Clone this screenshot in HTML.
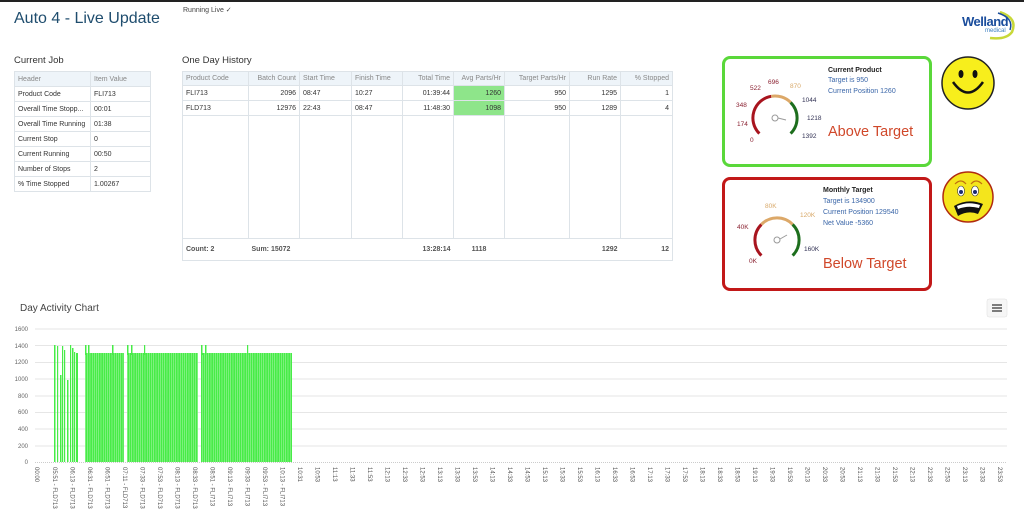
<!DOCTYPE html>
<html><head><meta charset="utf-8"><style>
*{margin:0;padding:0;box-sizing:border-box}
body{width:1024px;height:524px;background:#fff;position:relative;overflow:hidden;font-family:"Liberation Sans",sans-serif;color:#333}
.abs{position:absolute}
table{border-collapse:collapse;font-size:7px;table-layout:fixed}
td{border:1px solid #dde3e8;padding:0 3px;white-space:nowrap;overflow:hidden;color:#333}
.hd td{background:#eef4f9;color:#888}
</style></head><body>
<div class="abs" style="left:0;top:0;width:1024px;height:2px;background:#222"></div>
<div class="abs" style="left:14px;top:10px;font-size:16px;color:#1f4d6e">Auto 4 - Live Update</div>
<div class="abs" style="left:183px;top:6px;font-size:7px;color:#444">Running Live ✓</div>
<div class="abs" style="left:962px;top:14px;font-size:13px;font-weight:bold;color:#1a4d9c;letter-spacing:-0.5px">Welland</div>
<div class="abs" style="left:985px;top:28px;font-size:6px;color:#3a7fc0">medical</div>
<svg class="abs" style="left:960px;top:8px" width="60" height="32"><path d="M40 4 Q58 10 52 24 Q46 32 30 30" fill="none" stroke="#c8d838" stroke-width="2.5"/><path d="M38 5 Q54 10 50 22" fill="none" stroke="#1a4d9c" stroke-width="1.5"/></svg>

<div class="abs" style="left:14px;top:55px;font-size:9.5px;color:#333">Current Job</div>
<table class="abs" style="left:14px;top:71px;width:136px">
<colgroup><col style="width:76px"><col style="width:60px"></colgroup>
<tr class="hd" style="height:15px"><td>Header</td><td>Item Value</td></tr>
<tr style="height:15px"><td>Product Code</td><td>FLI713</td></tr>
<tr style="height:15px"><td>Overall Time Stopp...</td><td>00:01</td></tr>
<tr style="height:15px"><td>Overall Time Running</td><td>01:38</td></tr>
<tr style="height:15px"><td>Current Stop</td><td>0</td></tr>
<tr style="height:15px"><td>Current Running</td><td>00:50</td></tr>
<tr style="height:15px"><td>Number of Stops</td><td>2</td></tr>
<tr style="height:15px"><td>% Time Stopped</td><td>1.00267</td></tr>
</table>

<div class="abs" style="left:182px;top:55px;font-size:9.5px;color:#333">One Day History</div>
<table class="abs" style="left:182px;top:71px;width:490px">
<colgroup><col style="width:66px"><col style="width:51px"><col style="width:52px"><col style="width:51px"><col style="width:51px"><col style="width:51px"><col style="width:65px"><col style="width:51px"><col style="width:52px"></colgroup>
<tr class="hd" style="height:14px"><td>Product Code</td><td style="text-align:right">Batch Count</td><td>Start Time</td><td>Finish Time</td><td style="text-align:right">Total Time</td><td style="text-align:right">Avg Parts/Hr</td><td style="text-align:right">Target Parts/Hr</td><td style="text-align:right">Run Rate</td><td style="text-align:right">% Stopped</td></tr>
<tr style="height:15px"><td>FLI713</td><td style="text-align:right">2096</td><td>08:47</td><td>10:27</td><td style="text-align:right">01:39:44</td><td style="text-align:right;background:#8ee58a">1260</td><td style="text-align:right">950</td><td style="text-align:right">1295</td><td style="text-align:right">1</td></tr>
<tr style="height:15px"><td>FLD713</td><td style="text-align:right">12976</td><td>22:43</td><td>08:47</td><td style="text-align:right">11:48:30</td><td style="text-align:right;background:#8ee58a">1098</td><td style="text-align:right">950</td><td style="text-align:right">1289</td><td style="text-align:right">4</td></tr>
<tr style="height:123px"><td></td><td></td><td></td><td></td><td></td><td></td><td></td><td></td><td></td></tr>
<tr style="height:22px;font-weight:bold"><td style="border-right:none;color:#555">Count: 2</td><td style="border-left:none;border-right:none;color:#555">Sum: 15072</td><td style="border:none;border-bottom:1px solid #dde3e8"></td><td style="border:none;border-bottom:1px solid #dde3e8"></td><td style="text-align:right;border:none;border-bottom:1px solid #dde3e8;color:#555">13:28:14</td><td style="text-align:center;border:none;border-bottom:1px solid #dde3e8;color:#555">1118</td><td style="border:none;border-bottom:1px solid #dde3e8"></td><td style="text-align:right;border:none;border-bottom:1px solid #dde3e8;color:#555">1292</td><td style="text-align:right;border-left:none;color:#555">12</td></tr>
</table>

<div class="abs" style="left:722px;top:56px;width:210px;height:111px;border:3px solid #5ad83a;border-radius:8px"></div>
<div class="abs" style="left:722px;top:177px;width:210px;height:114px;border:3px solid #c21818;border-radius:8px"></div>

<svg class="abs" style="left:0;top:0" width="1024" height="524" font-family="Liberation Sans, sans-serif">
<g fill="none" stroke-width="3">
<path d="M759.4 133.6 A22 22 0 0 1 771.2 96.3" stroke="#a8141e"/>
<path d="M771.2 96.3 A22 22 0 0 1 790.6 102.4" stroke="#dca868"/>
<path d="M790.6 102.4 A22 22 0 0 1 790.6 133.6" stroke="#1d6e1d"/>
</g>
<circle cx="775" cy="118" r="3" fill="none" stroke="#999"/><line x1="778" y1="118" x2="786" y2="120" stroke="#999"/>
<g font-size="6.5" fill="#8a2030">
<text x="750" y="142">0</text><text x="737" y="126">174</text><text x="736" y="107">348</text><text x="750" y="90">522</text><text x="768" y="84">696</text></g>
<text x="790" y="88" font-size="6.5" fill="#d8a868">870</text>
<g font-size="6.5" fill="#335">
<text x="802" y="102">1044</text><text x="807" y="120">1218</text><text x="802" y="138">1392</text></g>
<text x="828" y="72" font-size="7" font-weight="bold" fill="#222">Current Product</text>
<text x="828" y="82" font-size="7" fill="#3a66a8">Target is 950</text>
<text x="828" y="93" font-size="7" fill="#3a66a8">Current Position 1260</text>
<text x="828" y="136" font-size="14.5" fill="#d0482a">Above Target</text>
<g fill="none" stroke-width="3">
<path d="M761.4 255.6 A22 22 0 0 1 761.4 224.4" stroke="#a8141e"/>
<path d="M761.4 224.4 A22 22 0 0 1 792.6 224.4" stroke="#dca868"/>
<path d="M792.6 224.4 A22 22 0 0 1 792.6 255.6" stroke="#1d6e1d"/>
</g>
<circle cx="777" cy="240" r="3" fill="none" stroke="#999"/><line x1="780" y1="239" x2="787" y2="235" stroke="#999"/>
<g font-size="6.5"><text x="749" y="263" fill="#8a2030">0K</text><text x="737" y="229" fill="#8a2030">40K</text><text x="765" y="208" fill="#d8a868">80K</text><text x="800" y="217" fill="#d8a868">120K</text><text x="804" y="251" fill="#335">160K</text></g>
<text x="823" y="192" font-size="7" font-weight="bold" fill="#222">Monthly Target</text>
<text x="823" y="203" font-size="7" fill="#3a66a8">Target is 134900</text>
<text x="823" y="214" font-size="7" fill="#3a66a8">Current Position 129540</text>
<text x="823" y="225" font-size="7" fill="#3a66a8">Net Value -5360</text>
<text x="823" y="268" font-size="14.5" fill="#d0482a">Below Target</text>
<circle cx="968" cy="83" r="26" fill="#f7ee1c" stroke="#222" stroke-width="1.5"/>
<ellipse cx="961" cy="74" rx="2.5" ry="4" fill="#111"/><ellipse cx="975" cy="74" rx="2.5" ry="4" fill="#111"/>
<path d="M953 82 Q968 103 983 82" fill="none" stroke="#111" stroke-width="2.5"/>
<circle cx="968" cy="197" r="25" fill="#f4e51c" stroke="#b02a10" stroke-width="1.5"/>
<path d="M955 184 Q961 178 966 184 M971 184 Q976 178 982 184" fill="none" stroke="#c07010" stroke-width="1.2"/>
<ellipse cx="961" cy="191" rx="3.5" ry="5" fill="#fff" stroke="#333" stroke-width=".6"/><ellipse cx="975" cy="191" rx="3.5" ry="5" fill="#fff" stroke="#333" stroke-width=".6"/>
<circle cx="961" cy="192" r="2" fill="#1a2a70"/><circle cx="975" cy="192" r="2" fill="#1a2a70"/>
<path d="M954 206 Q968 198 983 204 L978 214 Q968 210 958 216 Z" fill="#111"/>
<path d="M957 206 Q968 201 980 205 L979 208 Q968 205 958 209Z" fill="#fff"/>

<text x="20" y="311" font-size="10" fill="#444">Day Activity Chart</text>
<rect x="987" y="299" width="20" height="18" rx="2" fill="#f6f6f6" stroke="#ddd" stroke-width=".5"/>
<path d="M992 305h10M992 308h10M992 311h10" stroke="#333" stroke-width="1.3"/>
<g stroke="#e6e6e6" stroke-width="1">
<path d="M35 329H1007M35 345.5H1007M35 362.5H1007M35 379H1007M35 396H1007M35 412.5H1007M35 429H1007M35 446H1007"/></g>
<line x1="35" y1="462.5" x2="1007" y2="462.5" stroke="#ccc" stroke-dasharray="1 1"/>
<g font-size="6" fill="#666" text-anchor="end">
<text x="28" y="331">1600</text><text x="28" y="348">1400</text><text x="28" y="364">1200</text><text x="28" y="381">1000</text><text x="28" y="398">800</text><text x="28" y="414">600</text><text x="28" y="431">400</text><text x="28" y="448">200</text><text x="28" y="464">0</text></g>
<defs><pattern id="bp" width="2.2" height="10" patternUnits="userSpaceOnUse"><rect width="1.9" height="10" fill="#47ec47"/><rect x="1.9" width=".3" height="10" fill="#c0f5c0"/></pattern></defs>
<g fill="#47ec47">
<rect x="54" y="345" width="1.5" height="117"/><rect x="57" y="346" width="1.2" height="116"/><rect x="60" y="375" width="1.5" height="87"/><rect x="62" y="346" width="1.2" height="116"/><rect x="64" y="350" width="1.2" height="112"/><rect x="67" y="380" width="1.5" height="82"/><rect x="70" y="345" width="1.2" height="117"/><rect x="72" y="348" width="1.5" height="114"/><rect x="74" y="352" width="1.2" height="110"/><rect x="76" y="353" width="2" height="109"/>
</g>
<rect x="85" y="353" width="39" height="109" fill="url(#bp)"/>
<rect x="127" y="353" width="71" height="109" fill="url(#bp)"/>
<rect x="201" y="353" width="91" height="109" fill="url(#bp)"/>
<g fill="#47ec47"><rect x="85" y="345" width="1.5" height="10"/><rect x="88" y="345" width="1.5" height="10"/><rect x="112" y="345" width="1.5" height="10"/><rect x="127" y="345" width="1.5" height="10"/><rect x="131" y="345" width="1.5" height="10"/><rect x="144" y="345" width="1.2" height="10"/><rect x="201" y="345" width="1.5" height="10"/><rect x="205" y="345" width="1.5" height="10"/><rect x="247" y="345" width="1.2" height="10"/></g>
<g font-size="6" fill="#555">
<text transform="translate(35,467) rotate(90)">00:00</text>
<text transform="translate(53,467) rotate(90)">05:51 - FLD713</text>
<text transform="translate(70.5,467) rotate(90)">06:13 - FLD713</text>
<text transform="translate(88,467) rotate(90)">06:31 - FLD713</text>
<text transform="translate(105.5,467) rotate(90)">06:51 - FLD713</text>
<text transform="translate(123,467) rotate(90)">07:11 - FLD713</text>
<text transform="translate(140.5,467) rotate(90)">07:33 - FLD713</text>
<text transform="translate(158,467) rotate(90)">07:53 - FLD713</text>
<text transform="translate(175.5,467) rotate(90)">08:13 - FLD713</text>
<text transform="translate(193,467) rotate(90)">08:33 - FLD713</text>
<text transform="translate(210.5,467) rotate(90)">08:51 - FLI713</text>
<text transform="translate(228,467) rotate(90)">09:13 - FLI713</text>
<text transform="translate(245.5,467) rotate(90)">09:33 - FLI713</text>
<text transform="translate(263,467) rotate(90)">09:53 - FLI713</text>
<text transform="translate(280.5,467) rotate(90)">10:13 - FLI713</text>
<text transform="translate(298,467) rotate(90)">10:31</text>
<text transform="translate(315.5,467) rotate(90)">10:53</text>
<text transform="translate(333,467) rotate(90)">11:13</text>
<text transform="translate(350.5,467) rotate(90)">11:33</text>
<text transform="translate(368,467) rotate(90)">11:53</text>
<text transform="translate(385.5,467) rotate(90)">12:13</text>
<text transform="translate(403,467) rotate(90)">12:33</text>
<text transform="translate(420.5,467) rotate(90)">12:53</text>
<text transform="translate(438,467) rotate(90)">13:13</text>
<text transform="translate(455.5,467) rotate(90)">13:33</text>
<text transform="translate(473,467) rotate(90)">13:53</text>
<text transform="translate(490.5,467) rotate(90)">14:13</text>
<text transform="translate(508,467) rotate(90)">14:33</text>
<text transform="translate(525.5,467) rotate(90)">14:53</text>
<text transform="translate(543,467) rotate(90)">15:13</text>
<text transform="translate(560.5,467) rotate(90)">15:33</text>
<text transform="translate(578,467) rotate(90)">15:53</text>
<text transform="translate(595.5,467) rotate(90)">16:13</text>
<text transform="translate(613,467) rotate(90)">16:33</text>
<text transform="translate(630.5,467) rotate(90)">16:53</text>
<text transform="translate(648,467) rotate(90)">17:13</text>
<text transform="translate(665.5,467) rotate(90)">17:33</text>
<text transform="translate(683,467) rotate(90)">17:53</text>
<text transform="translate(700.5,467) rotate(90)">18:13</text>
<text transform="translate(718,467) rotate(90)">18:33</text>
<text transform="translate(735.5,467) rotate(90)">18:53</text>
<text transform="translate(753,467) rotate(90)">19:13</text>
<text transform="translate(770.5,467) rotate(90)">19:33</text>
<text transform="translate(788,467) rotate(90)">19:53</text>
<text transform="translate(805.5,467) rotate(90)">20:13</text>
<text transform="translate(823,467) rotate(90)">20:33</text>
<text transform="translate(840.5,467) rotate(90)">20:53</text>
<text transform="translate(858,467) rotate(90)">21:13</text>
<text transform="translate(875.5,467) rotate(90)">21:33</text>
<text transform="translate(893,467) rotate(90)">21:53</text>
<text transform="translate(910.5,467) rotate(90)">22:13</text>
<text transform="translate(928,467) rotate(90)">22:33</text>
<text transform="translate(945.5,467) rotate(90)">22:53</text>
<text transform="translate(963,467) rotate(90)">23:13</text>
<text transform="translate(980.5,467) rotate(90)">23:33</text>
<text transform="translate(998,467) rotate(90)">23:53</text>
</g>
</svg>
</body></html>
